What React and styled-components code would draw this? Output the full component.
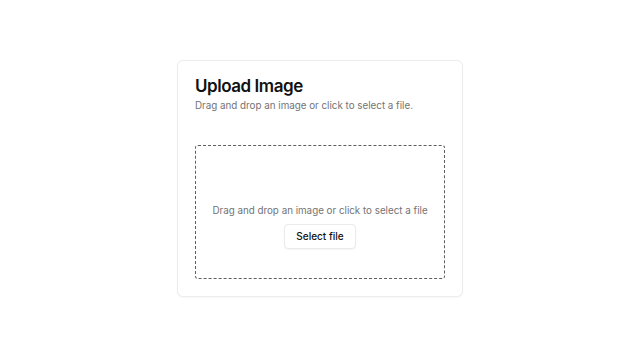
import styled, { createGlobalStyle } from "styled-components";

const GlobalStyle = createGlobalStyle`
  html, body {
    margin: 0;
    padding: 0;
    background: #ffffff;
    font-family: Inter, "Liberation Sans", sans-serif;
  }
  * {
    box-sizing: border-box;
  }
`;

const Page = styled.div`
  height: 357px;
  display: flex;
  align-items: center;
  justify-content: center;
`;

const Card = styled.div`
  width: 286px;
  height: 237px;
  padding: 15px 17px 17px;
  border: 1px solid #ececec;
  border-radius: 6px;
  background: #fff;
  box-shadow: 0 1px 2px rgba(0, 0, 0, 0.04);
  display: flex;
  flex-direction: column;
`;

const Title = styled.h2`
  margin: 0;
  font-size: 17px;
  font-weight: 600;
  color: #111;
  letter-spacing: -0.45px;
  line-height: 20px;
`;

const Subtitle = styled.p`
  margin: 3px 0 0;
  font-size: 9.8px;
  color: #737373;
  line-height: 14px;
`;

const DropZone = styled.div`
  margin-top: 32px;
  flex: 1;
  border: 1.7px dashed #5e5e5e;
  border-radius: 3px;
  display: flex;
  flex-direction: column;
  align-items: center;
  justify-content: center;
  gap: 6px;
  padding-top: 28px;
`;

const Hint = styled.p`
  margin: 0;
  font-size: 9.8px;
  color: #737373;
  line-height: 14px;
`;

const Button = styled.button`
  font-family: inherit;
  font-size: 10px;
  font-weight: 500;
  color: #111;
  background: #fff;
  border: 1px solid #eaeaea;
  border-radius: 4px;
  height: 25px;
  padding: 0 11px;
  box-shadow: 0 1px 2px rgba(0, 0, 0, 0.04);
  cursor: pointer;
`;

export default function App() {
  return (
    <>
      <GlobalStyle />
      <Page>
        <Card>
          <Title>Upload Image</Title>
          <Subtitle>Drag and drop an image or click to select a file.</Subtitle>
          <DropZone>
            <Hint>Drag and drop an image or click to select a file</Hint>
            <Button>Select file</Button>
          </DropZone>
        </Card>
      </Page>
    </>
  );
}
